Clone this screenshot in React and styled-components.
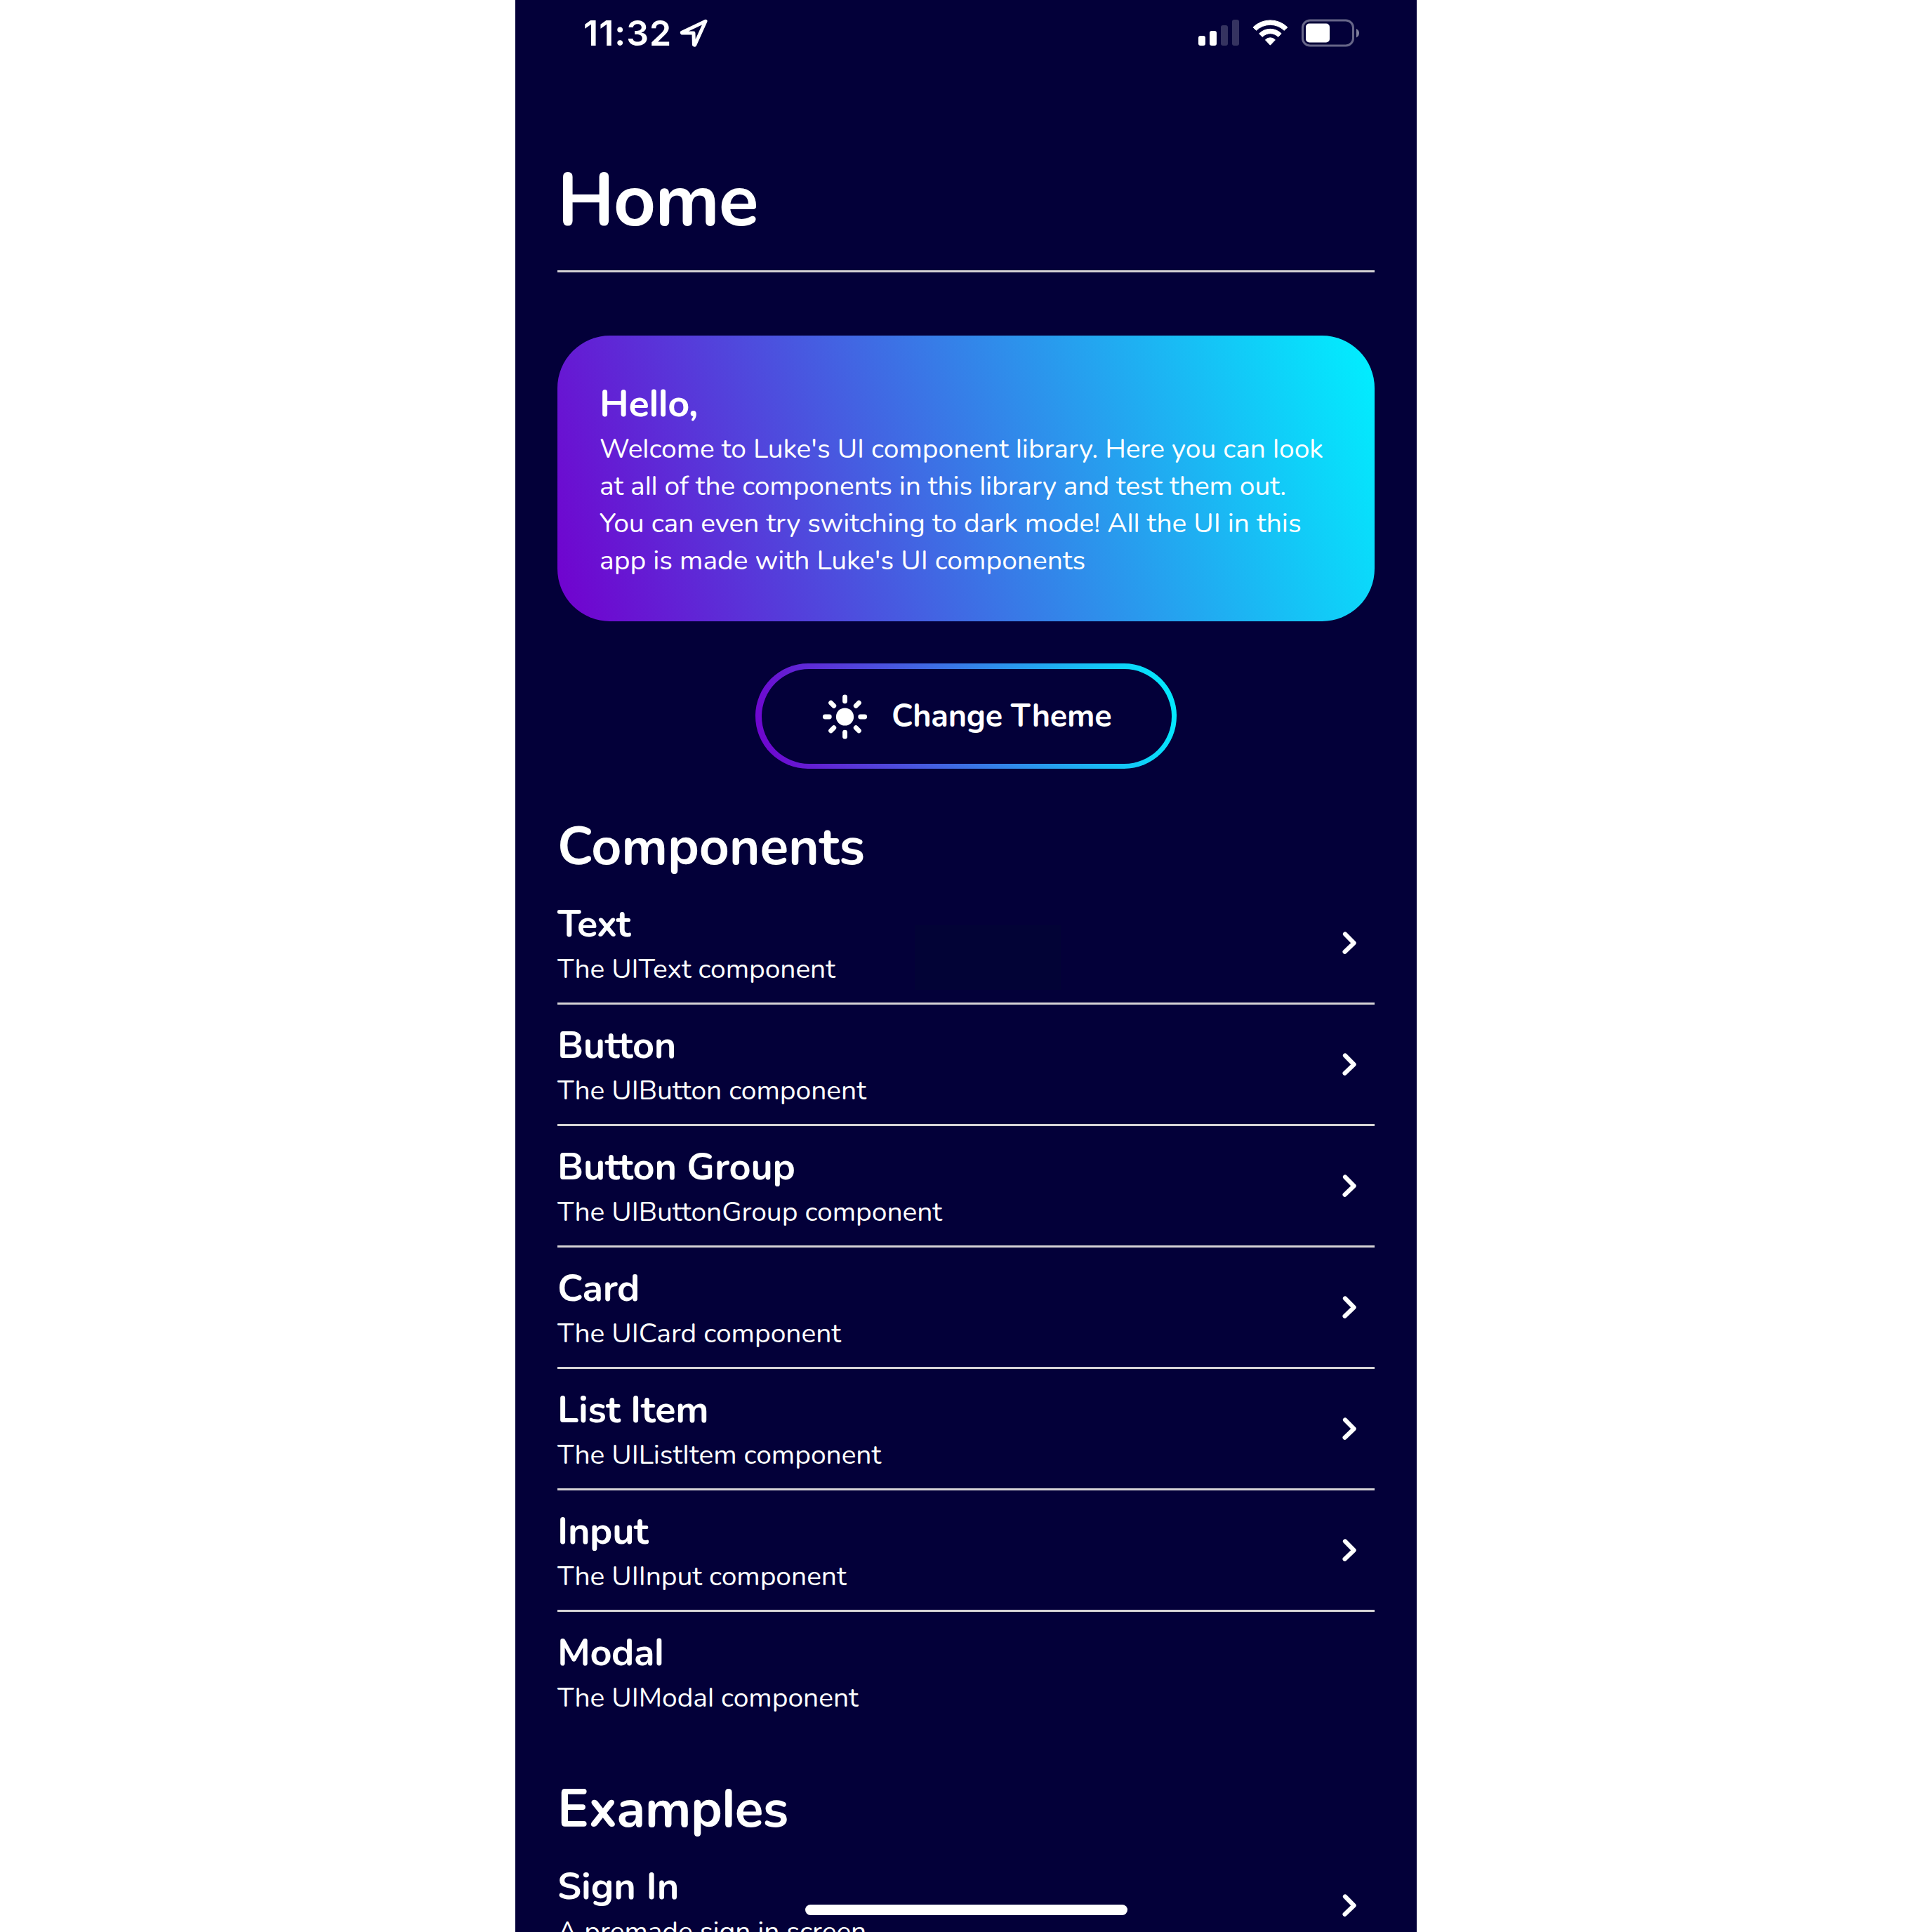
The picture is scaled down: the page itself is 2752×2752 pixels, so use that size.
import React from 'react';
import styled, { createGlobalStyle } from 'styled-components';

const GlobalStyle = createGlobalStyle`
  * { box-sizing: border-box; }
  body { margin: 0; background: #ffffff; }
`;

const Page = styled.div`
  display: flex;
  justify-content: center;
  height: 2752px;
  overflow: hidden;
`;

const Phone = styled.main`
  position: relative;
  display: flex;
  flex-direction: column;
  width: 1284px;
  height: 2752px;
  overflow: hidden;
  background: #030039;
  color: #ffffff;
  font-family: Nunito, 'Nunito Sans', Lato, 'Open Sans', sans-serif;
  font-feature-settings: 'ss02', 'liga';
`;

const StatusBar = styled.header`
  display: flex;
  align-items: center;
  justify-content: space-between;
  flex: none;
  height: 94px;
  padding: 0 80px 0 97px;
`;

const ClockGroup = styled.div`
  display: flex;
  align-items: center;
  gap: 10px;
`;

const Clock = styled.span`
  font: 600 50px/60px Inter, 'Liberation Sans', sans-serif;
  font-feature-settings: normal;
  letter-spacing: 1px;
`;

const StatusIcons = styled.div`
  display: flex;
  align-items: center;
  gap: 19px;
`;

const Icon = styled.svg`
  display: block;
  flex: none;
`;

const Content = styled.div`
  display: flex;
  flex-direction: column;
  padding: 120px 60px 0;
`;

const PageTitle = styled.h1`
  flex: none;
  margin: 0;
  height: 171px;
  font-size: 105px;
  font-weight: 700;
  line-height: 146px;
  letter-spacing: -1.3px;
`;

const Divider = styled.hr`
  flex: none;
  width: 100%;
  height: 3px;
  margin: 0;
  border: 0;
  background: #d6d3d6;
`;

const Card = styled.section`
  display: flex;
  flex-direction: column;
  height: 407px;
  margin-top: 90px;
  padding: 60px;
  border-radius: 75px;
  background: linear-gradient(70.7deg, #7200ce, #00f0ff);
`;

const Title = styled.h3`
  margin: 0;
  padding-top: 1px;
  font-size: 54px;
  font-weight: 700;
  line-height: 73.6px;
  letter-spacing: ${(p) => p.$track ?? -0.3}px;
  white-space: nowrap;
`;

const BodyText = styled.p`
  margin: 0;
  font-size: 39px;
  font-weight: 400;
  line-height: 53.2px;
  letter-spacing: ${(p) => p.$track ?? -0.03}px;
  white-space: nowrap;
`;

const ThemeButton = styled.button`
  display: flex;
  align-self: center;
  width: 600px;
  height: 150px;
  margin: 60px 0 0;
  padding: 8px 7px 7px 8.5px;
  border: 0;
  border-radius: 75px;
  background: linear-gradient(76deg, #7200ce, #00f0ff);
  color: inherit;
  font-family: inherit;
  font-feature-settings: inherit;
`;

const ThemeButtonFace = styled.span`
  display: flex;
  align-items: center;
  flex: 1;
  gap: 34px;
  padding-left: 86.5px;
  border-radius: 67.5px;
  background: #030039;
`;

const ThemeButtonLabel = styled.span`
  padding-bottom: 1px;
  font-size: 45px;
  font-weight: 700;
  line-height: 61px;
  letter-spacing: -0.28px;
  white-space: nowrap;
`;

const Section = styled.section`
  display: flex;
  flex-direction: column;
  margin-top: 60px;
`;

const SectionTitle = styled.h2`
  margin: 0;
  font-size: 75px;
  font-weight: 700;
  line-height: 103px;
  letter-spacing: ${(p) => p.$track}px;
`;

const ListItem = styled.div`
  position: relative;
  display: flex;
  align-items: center;
  justify-content: space-between;
  height: 170px;
  padding: 0 24px 0 0;
`;

const ItemText = styled.div`
  display: flex;
  flex-direction: column;
`;

const Patch = styled.span`
  position: absolute;
  left: 509px;
  top: 60px;
  width: 208px;
  height: 92px;
  background: #020336;
`;

const HomeIndicator = styled.div`
  position: absolute;
  left: 413px;
  bottom: 24px;
  width: 459px;
  height: 15px;
  border-radius: 7.5px;
  background: #ffffff;
`;

const Chevron = () => (
  <Icon width="24" height="36" viewBox="0 0 24 36" fill="none" stroke="#fff" strokeWidth="6.2" strokeLinecap="round" strokeLinejoin="round">
    <path d="M6 5.5 L18.6 18.2 L5.6 30.8" />
  </Icon>
);

const LocationArrow = () => (
  <Icon width="42" height="42" viewBox="0 0 42 42" fill="none" stroke="#fff" strokeWidth="5" strokeLinecap="round" strokeLinejoin="round">
    <path d="M38 4.3 L4.3 20.2 Q4 21 5.3 21.1 L21 21.1 L21.4 37.8 Q22.2 38.8 22.9 37.8 Z" />
  </Icon>
);

const Signal = () => (
  <Icon width="58" height="38" viewBox="0 0 58 38" fill="#fff">
    <rect x="0" y="23" width="10" height="14" rx="3" />
    <rect x="16" y="16" width="10" height="21" rx="3" />
    <rect x="32" y="8" width="10" height="29" rx="3" opacity=".2" />
    <rect x="48" y="0" width="10" height="37" rx="3" opacity=".2" />
  </Icon>
);

const Wifi = () => (
  <Icon width="51" height="38" viewBox="0 0 51 38" fill="#fff" stroke="#fff" strokeWidth="1" strokeLinejoin="round">
    <path d="M0.9 10.9 A35 35 0 0 1 49.9 10.9 L45.2 15.3 A28.5 28.5 0 0 0 5.6 15.3 Z" />
    <path d="M9.6 19.9 A22.3 22.3 0 0 1 41.2 19.9 L36.6 24.4 A15.7 15.7 0 0 0 14.2 24.4 Z" />
    <path d="M18.4 28.8 A9.7 9.7 0 0 1 32.4 28.8 L25.4 36.2 Z" />
  </Icon>
);

const Battery = () => (
  <Icon width="84" height="40" viewBox="0 0 84 40" fill="none">
    <rect x="1.5" y="2" width="72" height="36" rx="10.5" stroke="#fff" strokeOpacity=".4" strokeWidth="3" />
    <rect x="6" y="6.5" width="34" height="27" rx="5" fill="#fff" />
    <path d="M78 14 Q82 16 82 20 Q82 24.5 78 26.5 Z" fill="#fff" fillOpacity=".5" />
  </Icon>
);

const rays = [0, 45, 90, 135, 180, 225, 270, 315];

const Sun = () => (
  <Icon width="65" height="64" viewBox="-32.5 -32 65 64">
    <circle r="12.6" fill="#fff" />
    {rays.map((a) => (
      <path key={a} d="M0 -28.2 V-22.2" stroke="#fff" strokeWidth="6.8" strokeLinecap="round" transform={`rotate(${a})`} />
    ))}
  </Icon>
);

const components = [
  { name: 'Text', nameTrack: -1.4, info: 'The UIText component', infoTrack: -0.06, patch: true },
  { name: 'Button', info: 'The UIButton component' },
  { name: 'Button Group', nameTrack: -0.16, info: 'The UIButtonGroup component' },
  { name: 'Card', info: 'The UICard component' },
  { name: 'List Item', info: 'The UIListItem component' },
  { name: 'Input', nameTrack: -0.35, info: 'The UIInput component' },
  { name: 'Modal', nameTrack: -0.45, info: 'The UIModal component', last: true },
];

const examples = [
  { name: 'Sign In', nameTrack: -0.04, info: 'A premade sign in screen', infoTrack: -0.06 },
];

const Row = ({ item, divided }) => (
  <>
    <ListItem>
      <ItemText>
        <Title $track={item.nameTrack}>{item.name}</Title>
        <BodyText $track={item.infoTrack}>{item.info}</BodyText>
      </ItemText>
      {item.patch && <Patch />}
      {!item.last && <Chevron />}
    </ListItem>
    {divided && <Divider />}
  </>
);

export default function App() {
  return (
    <>
      <GlobalStyle />
      <Page>
        <Phone>
          <StatusBar>
            <ClockGroup>
              <Clock>11:32</Clock>
              <LocationArrow />
            </ClockGroup>
            <StatusIcons>
              <Signal />
              <Wifi />
              <Battery />
            </StatusIcons>
          </StatusBar>
          <Content>
            <PageTitle>Home</PageTitle>
            <Divider />
            <Card>
              <Title>Hello,</Title>
              <BodyText $track={-0.02}>Welcome to Luke's UI component library. Here you can look</BodyText>
              <BodyText $track={-0.1}>at all of the components in this library and test them out.</BodyText>
              <BodyText>You can even try switching to dark mode! All the UI in this</BodyText>
              <BodyText $track={-0.01}>app is made with Luke's UI components</BodyText>
            </Card>
            <ThemeButton>
              <ThemeButtonFace>
                <Sun />
                <ThemeButtonLabel>Change Theme</ThemeButtonLabel>
              </ThemeButtonFace>
            </ThemeButton>
            <Section>
              <SectionTitle $track={-0.14}>Components</SectionTitle>
              {components.map((item) => (
                <Row key={item.name} item={item} divided={!item.last} />
              ))}
            </Section>
            <Section>
              <SectionTitle $track={-0.6}>Examples</SectionTitle>
              {examples.map((item) => (
                <Row key={item.name} item={item} />
              ))}
            </Section>
          </Content>
          <HomeIndicator />
        </Phone>
      </Page>
    </>
  );
}
